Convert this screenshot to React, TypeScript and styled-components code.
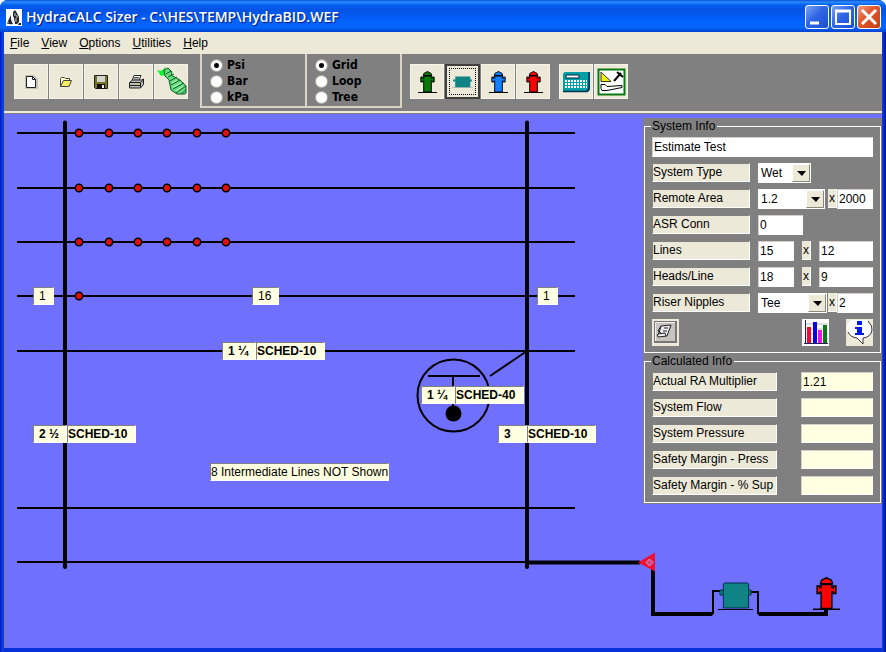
import React from "react";
import styled, { createGlobalStyle } from "styled-components";

const face = "#ece9d8";
const gray = "#808080";
const sans = '"Liberation Sans", Arial, sans-serif';
const titleFont = '"Open Sans", "Trebuchet MS", sans-serif';
const radioFont = '"DejaVu Sans Condensed", "DejaVu Sans", Tahoma, sans-serif';

const GlobalStyle = createGlobalStyle`
  * { box-sizing: border-box; }
  body { margin: 0; background: #fff; font: 12px/16px ${sans}; color: #000; }
  button, input, select { font: inherit; color: inherit; margin: 0; }
`;

const Window = styled.div`
  min-height: 100vh;
  display: flex;
  flex-direction: column;
  padding: 0 4px 4px;
  background: linear-gradient(90deg, #0014c8 0, #0a4be8 3px, transparent 4px, transparent calc(100% - 4px), #1440e0 calc(100% - 4px), #001090 100%), #0831d9;
  border-radius: 8px 8px 0 0;
`;

const TitleBar = styled.header`
  display: flex;
  align-items: center;
  gap: 4px;
  height: 32px;
  margin: 0 -4px;
  padding: 2px 5px 0 6px;
  border-radius: 8px 8px 0 0;
  background: linear-gradient(180deg, #0a50d0 0, #2a8bff 2px, #0560f0 5px, #0453e3 10px, #0260fb 20px, #0566ff 27px, #0345cf 32px);
`;

const Title = styled.h1`
  flex: 1;
  margin: 0;
  font: 600 14px/20px ${titleFont};
  color: #fff;
  text-shadow: 1px 1px 1px #0a1883;
  white-space: nowrap;
`;

const Captions = styled.div`
  display: flex;
  gap: 2px;
`;

const CaptionButton = styled.button<{ $close?: boolean }>`
  display: flex;
  width: 24px;
  height: 24px;
  padding: 0;
  border: 1px solid #fff;
  border-radius: 3px;
  background: ${(p) =>
    p.$close
      ? "linear-gradient(135deg, #f0a088, #e35a31 40%, #c83c10)"
      : "linear-gradient(135deg, #7fa4f5, #2f66e6 45%, #1d4fd0)"};
`;

const MenuBar = styled.nav`
  display: flex;
  gap: 12px;
  height: 22px;
  padding: 0 6px;
  background: ${face};
`;

const MenuItem = styled.button`
  padding: 0;
  border: 0;
  background: none;
  line-height: 20px;
`;

const Toolbar = styled.div`
  display: flex;
  align-items: flex-start;
  height: 57px;
  padding-left: 10px;
  background: ${gray};
`;

const ButtonGroup = styled.div`
  display: flex;
  gap: 1px;
  margin: 10px 9px 0 0;
`;

const ToolButton = styled.button<{ $active?: boolean }>`
  display: flex;
  align-items: center;
  justify-content: center;
  width: ${(p) => (p.$active ? 35 : 34)}px;
  height: 35px;
  padding: 0;
  background: ${face};
  border: ${(p) => (p.$active ? "2px solid #404040" : "1px solid #f6f4ea")};
  outline: ${(p) => (p.$active ? "1px dotted #000" : "none")};
  outline-offset: -5px;
`;

const RadioFrame = styled.fieldset`
  display: flex;
  flex-direction: column;
  min-width: 0;
  width: 105px;
  height: 54px;
  margin: 0;
  padding: 3px 0 0 9px;
  border: solid #d8d5c8;
  border-width: 0 0 2px 2px;
  &:last-child { width: 97px; border-right-width: 2px; }
`;

const RadioPair = styled.div`
  display: flex;
  margin: 0 8px 0 3px;
`;

const RadioLabel = styled.label`
  display: flex;
  align-items: center;
  gap: 5px;
  height: 16px;
  font: bold 12px/16px ${radioFont};
`;

const Radio = styled.input`
  appearance: none;
  width: 11px;
  height: 11px;
  border-radius: 50%;
  background: #fff;
  box-shadow: 0 0 0 1px #aaa89c;
  &:checked { background: radial-gradient(circle, #000 0 2px, #fff 3px); }
`;

const Separator = styled.div`
  height: 3px;
  background: ${face};
  border-bottom: 1px solid ${gray};
`;

const Workspace = styled.main`
  position: relative;
  flex: 1;
  display: flex;
  justify-content: flex-end;
  background: #7070ff;
  border-left: 1px solid ${gray};
`;

const Piping = styled.svg`
  position: absolute;
  left: 0;
  top: 0;
`;

const Tag = styled.div<{ $x: number; $y: number; $bold?: boolean }>`
  position: absolute;
  left: ${(p) => p.$x}px;
  top: ${(p) => p.$y}px;
  display: flex;
  font-weight: ${(p) => (p.$bold ? "bold" : "normal")};
`;

const TagCell = styled.span<{ $w?: number }>`
  width: ${(p) => (p.$w ? `${p.$w}px` : "auto")};
  height: 18px;
  padding: 0 ${(p) => (p.$w ? 1 : 0)}px 0 ${(p) => (p.$w && p.$w < 40 ? 5 : 0)}px;
  border: 1px solid #fff;
  border-color: ${gray} #fff #fff ${gray};
  background: #ffffe1;
  white-space: nowrap;
`;

const Sidebar = styled.aside`
  position: relative;
  width: 239px;
  margin-top: 4px;
  align-self: flex-start;
  background: ${gray};
  padding: 0 1px 1px;
`;

const Group = styled.fieldset`
  min-width: 0;
  margin: 0;
  padding: 3px 7px 6px;
  border: 1px solid #fff;
`;

const Legend = styled.legend`
  margin-left: -1px;
  padding: 0 2px 0 1px;
  line-height: 16px;
`;

const Rows = styled.div`
  display: flex;
  flex-direction: column;
  gap: 6px;
`;

const Row = styled.div`
  display: flex;
  height: 20px;
  justify-content: space-between;
`;

const Caption = styled.label<{ $wide?: boolean }>`
  width: ${(p) => (p.$wide ? 125 : 98)}px;
  height: 19px;
  background: ${face};
  border: 1px solid #fff;
  border-color: ${gray} #fff #fff ${gray};
  line-height: 16px;
  white-space: nowrap;
`;

const Values = styled.div`
  display: flex;
  justify-content: space-between;
  width: 115px;
`;

const Field = styled.input<{ $w?: number; $calc?: boolean }>`
  width: ${(p) => (p.$w ? `${p.$w}px` : "100%")};
  height: ${(p) => (p.$calc ? 19 : 20)}px;
  padding: 0 1px;
  border: 1px solid #fff;
  border-color: #d4d0c8 #fff #fff #d4d0c8;
  border-radius: 0;
  background: ${(p) => (p.$calc ? "#ffffe1" : "#fff")};
`;

const Cross = styled.span`
  width: 9px;
  height: 19px;
  background: ${face};
  border: solid #fff;
  border-width: 0 1px 1px 0;
  text-align: center;
  line-height: 18px;
`;

const Pair = styled.div`
  display: flex;
`;

const SelectBox = styled.div<{ $w: number }>`
  position: relative;
  width: ${(p) => p.$w}px;
  height: 20px;
`;

const Select = styled.select`
  appearance: none;
  width: 100%;
  height: 20px;
  padding: 0 18px 0 2px;
  border: 1px solid #fff;
  border-radius: 0;
  background: #fff;
`;

const Arrow = styled.span`
  position: absolute;
  top: 1px;
  right: 1px;
  width: 18px;
  height: 18px;
  border: 1px solid #fff;
  border-color: #fff #8a887a #8a887a #fff;
  background: ${face};
  pointer-events: none;
`;

const Actions = styled.div`
  display: grid;
  grid-template-columns: 27px 1fr 27px 27px;
  column-gap: 17px;
  margin-top: 6px;
  & > :nth-child(2) { grid-column: 3; }
`;

const ActionButton = styled.button`
  width: 27px;
  height: 27px;
  padding: 0;
  border: 0;
  background: ${face};
  line-height: 0;
`;

function Hydrant({ color, ...box }: { color: string; x?: number; y?: number; width: number; height: number }) {
  return (
    <svg viewBox="0 0 20 22" preserveAspectRatio="none" {...box}>
      <path d="M3 6h2v1.500h10V6h2v5h-2v-1H5v1H3z" fill={color} stroke="#000" strokeWidth="1" />
      <path d="M6 21V5h8v16z" fill={color} stroke="#000" strokeWidth="1" />
      <path d="M5.500 4.500Q6 1.500 8 1.500L10 .5l2 1q2 0 2.500 3z" fill={color} stroke="#000" strokeWidth="1" />
      <path d="M5 7.500h10v2H5z" fill={color} />
      <path d="M0 21.500h20" stroke="#000" />
    </svg>
  );
}

function Tank({ outline, ...box }: { outline?: boolean; x?: number; y?: number; width: number; height: number }) {
  return (
    <svg viewBox="0 0 36 28" preserveAspectRatio="none" {...box}>
      <path d="M2 8h4v5H2zM30 8h4v5h-4z" fill="#008080" stroke={outline ? "#003c3c" : "none"} />
      <path d="M5.500 26V2l1-1h24l1 1v24z" fill="#108484" stroke={outline ? "#002c50" : "none"} />
      <path d="M0 27.500h36" stroke={outline ? "#000" : "#688"} />
    </svg>
  );
}

const NewIcon = () => (
  <svg width="16" height="16">
    <path d="M2 1h9l4 4v10H2z" fill="#c4c2b8" />
    <path d="M3.500 2.500h6l3 3v8h-9z" fill="#fff" stroke="#222" />
    <path d="M9.500 2.500v3h3" fill="none" stroke="#222" />
  </svg>
);
const OpenIcon = () => (
  <svg width="16" height="16">
    <path d="M2.500 12.500v-8l1-1h3l1 1h4v2" fill="#ffffd0" stroke="#444" />
    <path d="M2.500 12.500l3-6h8l-2.500 6z" fill="#f2ee60" stroke="#444" />
  </svg>
);
const SaveIcon = () => (
  <svg width="16" height="16">
    <path d="M1.500 1.500h13v13h-12l-1-1z" fill="#77752a" stroke="#222" />
    <path d="M4 2h8v6H4z" fill="#d5d5d0" />
    <path d="M4 10h8v5H4z" fill="#111" />
    <path d="M9 11h2v3H9z" fill="#eee" />
  </svg>
);
const PrintIcon = () => (
  <svg width="17" height="16">
    <path d="M4 6.500l2-5h7l-2 5z" fill="#fff" stroke="#222" />
    <path d="M6 3.500h5M5.500 5h5" stroke="#555" />
    <path d="M1.500 8.500l3-2.500h9l2-1v5.500l-3 3.500h-11z" fill="#bbb" stroke="#222" />
    <path d="M2 8.500h10.500l3-2.500M2 11.500h10M12.500 8.500v5" stroke="#222" fill="none" />
    <path d="M9 10h2" stroke="#dd0" />
  </svg>
);
const SprinklerIcon = () => (
  <svg width="31" height="31">
    <path d="M1 4l4 1 5-4-2 5 1 3-4 1z" fill="#10f030" />
    <path d="M8 4l4-2 4 4-1 3 9 5 6 6v7l-1 1h-8l-6-4-2-10-4-4z" fill="#66dc7c" stroke="#0b5a28" />
    <path d="M10 8l5-3M12 11l6-3M14 15l7-4M15 19l9-5M17 23l11-6M20 27l10-7M25 28l5-4" stroke="#0a6428" />
    <path d="M16 17l5-3M17 21l8-4M20 25l7-5" stroke="#bdf7c0" />
  </svg>
);
const CalculatorIcon = () => (
  <svg width="28" height="22">
    <path d="M3 1h25v18l-2 2H1V3z" fill="#007080" />
    <path d="M1 3l2-2h24v16l-2 3H1z" fill="#00a0a4" />
    <path d="M4 4h13v3H4z" fill="#fff" stroke="#024" />
    {[9, 12, 15].map((y) => (
      <path key={y} d={`M3 ${y + 1}h22`} stroke="#fff" strokeWidth="2" strokeDasharray="2 1" />
    ))}
    <path d="M1 20.500h24l2-3V1" fill="none" stroke="#003058" strokeWidth="1.500" />
  </svg>
);
const ToolsIcon = () => (
  <svg width="29" height="28">
    <path d="M1.500 1.500h26v25h-26z" fill="#fff" stroke="#087810" strokeWidth="2" />
    <path d="M4 4l10 9.500H4z" fill="#f5f000" stroke="#333" />
    <path d="M17 13l7-8M20 4l6 5" stroke="#000" strokeWidth="2" />
    <path d="M4 16.500h4l2 2 15-1v2l-15 3H5l-1-2z" fill="#fff" stroke="#000" />
  </svg>
);

const AppIcon = () => (
  <svg width="16" height="17">
    <path d="M0 0h16v17H0z" fill="#fff" />
    <path d="M2 12l3-6v5l2 4H3zM7 3l2-2 2 3 2 4v5l-2 2H9L8 9 7 7zM13 14h2v2h-3z" fill="#223" />
    <path d="M9 4v3M10 9v4M5 9l2 3M11 6v3" stroke="#ccd" />
    <path d="M1 14l5 1" stroke="#223" />
  </svg>
);
const NotesIcon = () => (
  <svg width="27" height="27">
    <path d="M2 2h23v22H2z" fill="#777" />
    <path d="M3 3h20v19H3z" fill="#c4c4c0" />
    <path d="M3.500 22V3.500H23" stroke="#eee" fill="none" />
    <path d="M9 7l10-1-4 11-9 1q-2-2 1-4z" fill="#eee" stroke="#222" />
    <path d="M12 9h4M11 12h4M6 15l7-1 1 3M9 7l-3 5 3 2" stroke="#222" fill="none" />
  </svg>
);
const ChartIcon = () => (
  <svg width="27" height="27">
    <path d="M0 0h27v27H0z" fill="#fff" />
    <path d="M3 5h23M3 10h23M3 15h23M3 20h23" stroke="#bbb" />
    <path d="M3.500 1v24" stroke="#225" />
    <path d="M5 8h4v16H5z" fill="#e8102c" />
    <path d="M11 3h4v21h-4z" fill="#0808d8" />
    <path d="M16 11h4v13h-4z" fill="#f010f0" />
    <path d="M21 6h4v18h-4z" fill="#087818" />
    <path d="M2 24.500h24" stroke="#225" />
  </svg>
);
const InfoIcon = () => (
  <svg width="27" height="27">
    <path d="M5 1h16q6 5 5 10-1 7-9 8v6l-6-6Q2 18 1 11 0 5 5 1z" fill="#fff" />
    <path d="M22 2q5 5 4 9-1 7-9 8v6l-6-6q-7-1-9-6" fill="none" stroke="#333" strokeWidth="1" />
    <path d="M11 2h5v4h-5zM9 8h7v6h2v2H9v-2h2v-4H9z" fill="#0018e8" />
  </svg>
);

function Menu({ text }: { text: string }) {
  return (
    <MenuItem>
      <u>{text[0]}</u>
      {text.slice(1)}
    </MenuItem>
  );
}

function Radios({ name, items }: { name: string; items: string[] }) {
  return (
    <RadioFrame aria-label={name}>
      {items.map((t, i) => (
        <RadioLabel key={t}>
          <Radio type="radio" name={name} defaultChecked={i === 0} />
          {t}
        </RadioLabel>
      ))}
    </RadioFrame>
  );
}

function Dropdown({ id, w, value }: { id: string; w: number; value: string }) {
  return (
    <SelectBox $w={w}>
      <Select id={id}>
        <option>{value}</option>
      </Select>
      <Arrow>
        <svg width="16" height="16" aria-hidden="true">
          <path d="M4 6h9l-4 5z" />
        </svg>
      </Arrow>
    </SelectBox>
  );
}

function PipeTag({ x, y, size, type, w = 34 }: { x: number; y: number; size: string; type: string; w?: number }) {
  return (
    <Tag $x={x} $y={y} $bold>
      <TagCell $w={w}>{size}</TagCell>
      <TagCell $w={69}>{type}</TagCell>
    </Tag>
  );
}

const lineYs = [133, 188, 242, 296, 351, 508, 562];
const headXs = [79, 109, 138, 167, 197, 226];
const heads = [133, 188, 242].flatMap((y) => headXs.map((x) => [x, y])).concat([[79, 296]]);
const calculated = [
  ["Actual RA Multiplier", "1.21"],
  ["System Flow", ""],
  ["System Pressure", ""],
  ["Safety Margin - Press", ""],
  ["Safety Margin - % Sup", ""],
];

function PipingDiagram() {
  return (
    <Piping width="877" height="534" viewBox="5 114 877 534">
      <g stroke="#000" strokeWidth="2" fill="none">
        {lineYs.map((y) => (
          <path key={y} d={`M17 ${y}H${y === 562 ? 527 : 575}`} />
        ))}
        <circle cx="453.500" cy="395.500" r="36" />
        <path d="M428 376h52M453 376v32M490 376l37-25M713 614v-23h10M749 592h9v22" />
      </g>
      <g stroke="#000" strokeWidth="4" fill="none" strokeLinecap="round">
        <path d="M65 122.500V567M527 122.500V567M527 562.500h112" />
        <path d="M653 570v44h58M760 614h66v-4" />
      </g>
      <circle cx="453.500" cy="413.500" r="8" />
      {heads.map(([x, y]) => (
        <circle key={`${x}-${y}`} cx={x} cy={y} r="3.700" fill="#e01010" stroke="#000" strokeWidth="1.500" />
      ))}
      <path d="M638 562.500l17-10v19z" fill="#f01030" />
      <path d="M649.500 559l3.500 3.500-3.500 3.500-3.500-3.500z" fill="#e04070" stroke="#b0a8ff" />
      <Tank outline x={718} y={582} width={35} height={28} />
      <Hydrant color="#f00" x={813} y={577} width={27} height={33} />
    </Piping>
  );
}

export default function App() {
  return (
    <Window>
      <GlobalStyle />
      <TitleBar>
        <AppIcon />
        <Title>HydraCALC Sizer - C:\HES\TEMP\HydraBID.WEF</Title>
        <Captions>
          <CaptionButton aria-label="Minimize">
            <svg width="22" height="22"><path d="M4 17h9" stroke="#fff" strokeWidth="3" /></svg>
          </CaptionButton>
          <CaptionButton aria-label="Maximize">
            <svg width="22" height="22">
              <path d="M4 5h14v13H4z" fill="none" stroke="#fff" strokeWidth="2" />
              <path d="M3 5h16" stroke="#fff" strokeWidth="3" />
            </svg>
          </CaptionButton>
          <CaptionButton aria-label="Close" $close>
            <svg width="22" height="22"><path d="M4 4l14 14M18 4L4 18" stroke="#fff" strokeWidth="3" /></svg>
          </CaptionButton>
        </Captions>
      </TitleBar>
      <MenuBar>
        {["File", "View", "Options", "Utilities", "Help"].map((t) => (
          <Menu key={t} text={t} />
        ))}
      </MenuBar>
      <Toolbar>
        <ButtonGroup>
          <ToolButton aria-label="New"><NewIcon /></ToolButton>
          <ToolButton aria-label="Open"><OpenIcon /></ToolButton>
          <ToolButton aria-label="Save"><SaveIcon /></ToolButton>
          <ToolButton aria-label="Print"><PrintIcon /></ToolButton>
          <ToolButton aria-label="Sprinkler"><SprinklerIcon /></ToolButton>
        </ButtonGroup>
        <RadioPair>
          <Radios name="Units" items={["Psi", "Bar", "kPa"]} />
          <Radios name="Layout" items={["Grid", "Loop", "Tree"]} />
        </RadioPair>
        <ButtonGroup>
          <ToolButton aria-label="Green hydrant"><Hydrant color="#087808" width={19} height={22} /></ToolButton>
          <ToolButton aria-label="Tank" $active><Tank width={21} height={12} /></ToolButton>
          <ToolButton aria-label="Blue hydrant"><Hydrant color="#1480ff" width={19} height={22} /></ToolButton>
          <ToolButton aria-label="Red hydrant"><Hydrant color="#f00" width={19} height={22} /></ToolButton>
        </ButtonGroup>
        <ButtonGroup>
          <ToolButton aria-label="Calculate"><CalculatorIcon /></ToolButton>
          <ToolButton aria-label="Design tools"><ToolsIcon /></ToolButton>
        </ButtonGroup>
      </Toolbar>
      <Separator />
      <Workspace>
        <PipingDiagram />
        <Tag $x={28} $y={173}><TagCell $w={21}>1</TagCell></Tag>
        <Tag $x={247} $y={173}><TagCell $w={27}>16</TagCell></Tag>
        <Tag $x={532} $y={173}><TagCell $w={21}>1</TagCell></Tag>
        <PipeTag x={217} y={228} size="1 ¼" type="SCHED-10" />
        <PipeTag x={416} y={272} size="1 ¼" type="SCHED-40" />
        <PipeTag x={28} y={311} size="2 ½" type="SCHED-10" />
        <PipeTag x={493} y={311} size="3" type="SCHED-10" w={29} />
        <Tag $x={205} $y={349}><TagCell>8 Intermediate Lines NOT Shown</TagCell></Tag>
        <Sidebar>
          <Group>
            <Legend>System Info</Legend>
            <Rows>
              <Row><Field aria-label="System name" defaultValue="Estimate Test" /></Row>
              <Row>
                <Caption htmlFor="type">System Type</Caption>
                <Values><Dropdown id="type" w={53} value="Wet" /></Values>
              </Row>
              <Row>
                <Caption htmlFor="area">Remote Area</Caption>
                <Values>
                  <Dropdown id="area" w={67} value="1.2" />
                  <Pair><Cross>x</Cross><Field aria-label="Area size" $w={36} defaultValue="2000" /></Pair>
                </Values>
              </Row>
              <Row>
                <Caption htmlFor="asr">ASR Conn</Caption>
                <Values><Field id="asr" $w={45} defaultValue="0" /></Values>
              </Row>
              <Row>
                <Caption htmlFor="lines">Lines</Caption>
                <Values>
                  <Field id="lines" $w={36} defaultValue="15" />
                  <Cross>x</Cross>
                  <Field aria-label="Line spacing" $w={54} defaultValue="12" />
                </Values>
              </Row>
              <Row>
                <Caption htmlFor="heads">Heads/Line</Caption>
                <Values>
                  <Field id="heads" $w={36} defaultValue="18" />
                  <Cross>x</Cross>
                  <Field aria-label="Head spacing" $w={54} defaultValue="9" />
                </Values>
              </Row>
              <Row>
                <Caption htmlFor="riser">Riser Nipples</Caption>
                <Values>
                  <Dropdown id="riser" w={69} value="Tee" />
                  <Pair><Cross>x</Cross><Field aria-label="Nipple length" $w={36} defaultValue="2" /></Pair>
                </Values>
              </Row>
            </Rows>
            <Actions>
              <ActionButton aria-label="Notes"><NotesIcon /></ActionButton>
              <ActionButton aria-label="Chart"><ChartIcon /></ActionButton>
              <ActionButton aria-label="Information"><InfoIcon /></ActionButton>
            </Actions>
          </Group>
          <Group>
            <Legend>Calculated Info</Legend>
            <Rows>
              {calculated.map(([name, value], i) => (
                <Row key={name}>
                  <Caption $wide htmlFor={`calc${i}`}>{name}</Caption>
                  <Field id={`calc${i}`} $w={72} $calc readOnly value={value} />
                </Row>
              ))}
            </Rows>
          </Group>
        </Sidebar>
      </Workspace>
    </Window>
  );
}
